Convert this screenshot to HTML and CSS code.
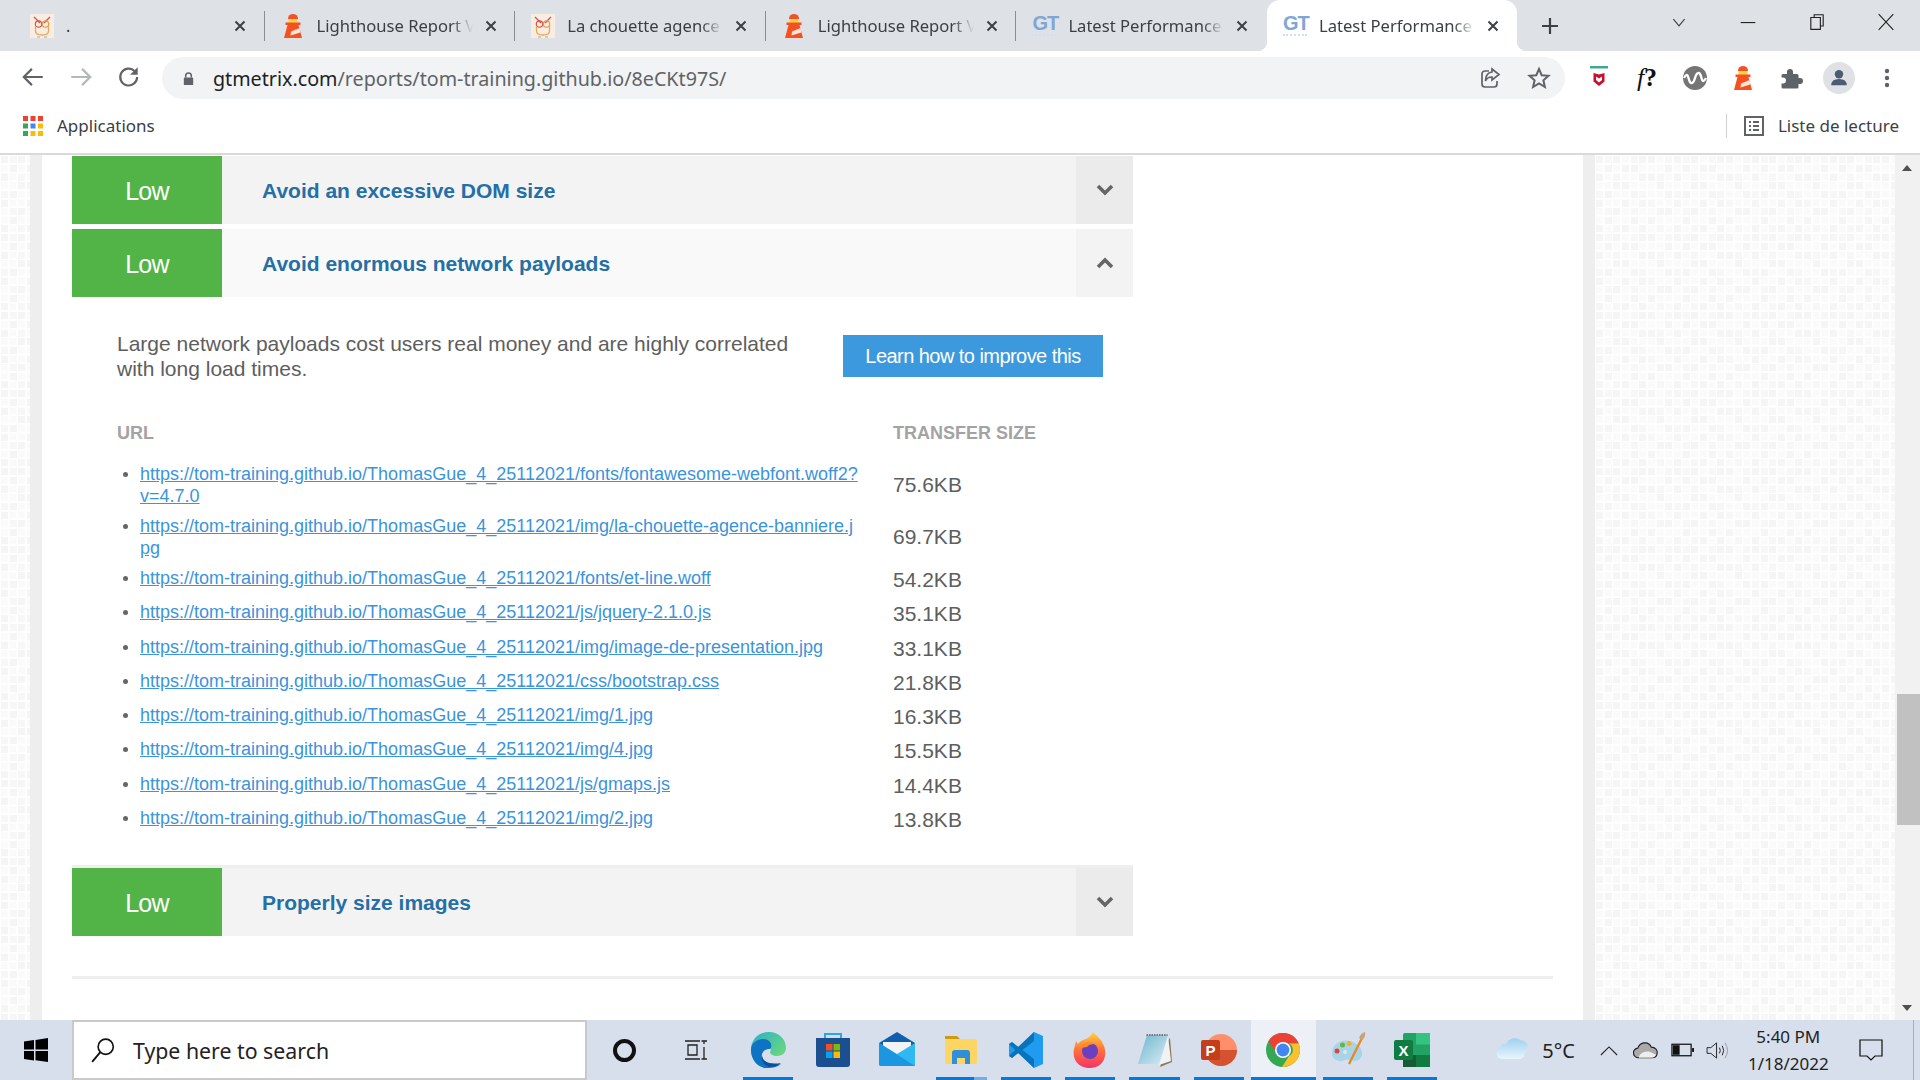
FILE: index.html
```html
<!DOCTYPE html>
<html lang="en">
<head>
    <meta charset="UTF-8">
    <meta name="viewport" content="width=device-width, initial-scale=1.0">
    <title>Latest Performance Report</title>
    <link rel="stylesheet" href="styles.css">
</head>
<body>
    <svg class="defs" aria-hidden="true">
        <defs>
            <pattern id="grid" width="8.67" height="8.67" patternUnits="userSpaceOnUse">
                <rect x="1" y="1" width="7" height="7" fill="#fafafa"/>
            </pattern>
            <pattern id="noise" width="78" height="78" patternUnits="userSpaceOnUse">
                <g fill="#f5f5f5">
                    <rect x="1" y="1" width="7" height="7"/><rect x="18" y="1" width="7" height="7"/><rect x="44" y="1" width="7" height="7"/><rect x="53" y="1" width="7" height="7"/>
                    <rect x="10" y="10" width="7" height="7"/><rect x="27" y="10" width="7" height="7"/><rect x="36" y="10" width="7" height="7"/><rect x="70" y="10" width="7" height="7"/>
                    <rect x="1" y="19" width="7" height="7"/><rect x="44" y="19" width="7" height="7"/><rect x="53" y="19" width="7" height="7"/>
                    <rect x="18" y="27" width="7" height="7"/><rect x="27" y="27" width="7" height="7"/><rect x="62" y="27" width="7" height="7"/>
                    <rect x="10" y="36" width="7" height="7"/><rect x="36" y="36" width="7" height="7"/><rect x="70" y="36" width="7" height="7"/>
                    <rect x="1" y="45" width="7" height="7"/><rect x="27" y="45" width="7" height="7"/><rect x="44" y="45" width="7" height="7"/>
                    <rect x="18" y="53" width="7" height="7"/><rect x="62" y="53" width="7" height="7"/><rect x="70" y="53" width="7" height="7"/>
                    <rect x="10" y="62" width="7" height="7"/><rect x="36" y="62" width="7" height="7"/><rect x="53" y="62" width="7" height="7"/>
                    <rect x="1" y="70" width="7" height="7"/><rect x="27" y="70" width="7" height="7"/><rect x="44" y="70" width="7" height="7"/>
                </g>
                <g fill="#f7f7f7">
                    <rect x="10" y="1" width="7" height="7"/><rect x="36" y="1" width="7" height="7"/><rect x="70" y="1" width="7" height="7"/>
                    <rect x="18" y="19" width="7" height="7"/><rect x="62" y="19" width="7" height="7"/><rect x="1" y="36" width="7" height="7"/>
                    <rect x="44" y="36" width="7" height="7"/><rect x="10" y="53" width="7" height="7"/><rect x="36" y="53" width="7" height="7"/>
                    <rect x="18" y="70" width="7" height="7"/><rect x="62" y="70" width="7" height="7"/><rect x="53" y="45" width="7" height="7"/>
                </g>
            </pattern>
            <symbol id="owl" viewBox="0 0 24 24">
                <rect width="24" height="24" fill="#f8ede3"/>
                <path d="M4 3l6 6M20 3l-6 6" stroke="#d9534a" stroke-width="1.4"/>
                <circle cx="8.5" cy="10" r="3.2" fill="none" stroke="#d9534a" stroke-width="1.2"/>
                <circle cx="15.5" cy="10" r="3.2" fill="none" stroke="#e29a4c" stroke-width="1.2"/>
                <path d="M5.5 12v5q0 4 6.500 4t6.500-4v-5" fill="none" stroke="#e8a85a" stroke-width="1.3"/>
                <path d="M7 23h3M14 23h3" stroke="#c9a080" stroke-width="1"/>
            </symbol>
            <symbol id="lighthouse" viewBox="0 0 24 24">
                <path d="M7 4.500a5 4.500 0 0 1 10 0V5H7z" fill="#f0502a"/>
                <rect x="7.500" y="5" width="9" height="4" fill="#fdd835"/>
                <rect x="4.500" y="8.500" width="15" height="2.500" fill="#f0502a"/>
                <path d="M6.500 11h11L21 24H3z" fill="#f4511e"/>
                <path d="M10 17.500l8.500-3.500 .8 4.500-9.800 3z" fill="#fbe3da"/>
            </symbol>
            <symbol id="x" viewBox="0 0 16 16">
                <path d="M3.500 3.500l9 9M12.500 3.500l-9 9" stroke="#3c4043" stroke-width="2" fill="none"/>
            </symbol>
        </defs>
    </svg>

    <div class="tabstrip">
        <div class="tab">
            <svg class="favicon"><use href="#owl"/></svg>
            <span class="tab-title">.</span>
            <svg class="tab-close"><use href="#x"/></svg>
        </div>
        <i class="tab-sep"></i>
        <div class="tab">
            <svg class="favicon"><use href="#lighthouse"/></svg>
            <span class="tab-title">Lighthouse Report Viewer</span>
            <svg class="tab-close"><use href="#x"/></svg>
        </div>
        <i class="tab-sep"></i>
        <div class="tab">
            <svg class="favicon"><use href="#owl"/></svg>
            <span class="tab-title">La chouette agence</span>
            <svg class="tab-close"><use href="#x"/></svg>
        </div>
        <i class="tab-sep"></i>
        <div class="tab">
            <svg class="favicon"><use href="#lighthouse"/></svg>
            <span class="tab-title">Lighthouse Report Viewer</span>
            <svg class="tab-close"><use href="#x"/></svg>
        </div>
        <i class="tab-sep"></i>
        <div class="tab">
            <span class="favicon gt">GT</span>
            <span class="tab-title">Latest Performance Report</span>
            <svg class="tab-close"><use href="#x"/></svg>
        </div>
        <i class="tab-sep tab-sep-off"></i>
        <div class="tab tab-active">
            <span class="favicon gt">GT</span>
            <span class="tab-title">Latest Performance Report</span>
            <svg class="tab-close"><use href="#x"/></svg>
        </div>
        <svg class="new-tab" viewBox="0 0 20 20"><path d="M10 2v16M2 10h16" stroke="#3c4043" stroke-width="2.200"/></svg>
        <div class="window-controls">
            <svg viewBox="0 0 16 16"><path d="M3 5.500l5 6 5-6" fill="none" stroke="#3c4043"/></svg>
            <svg viewBox="0 0 16 16"><path d="M1.500 8.500h13" stroke="#222" stroke-width="1"/></svg>
            <svg viewBox="0 0 16 16"><path d="M5.500 3.500V1.500h8v10h-2M2.500 4h8.500v10.500H2.500z" fill="none" stroke="#222"/></svg>
            <svg viewBox="0 0 16 16"><path d="M1.500 1l13 14M14.500 1l-13 14" stroke="#222"/></svg>
        </div>
    </div>

    <div class="toolbar">
        <svg class="nav-icon" viewBox="0 0 24 24"><path d="M21 12H4M11 4.500L3.500 12l7.500 7.500" fill="none" stroke="#5f6368" stroke-width="2"/></svg>
        <svg class="nav-icon" viewBox="0 0 24 24"><path d="M3 12h17M13 4.500l7.500 7.500-7.500 7.500" fill="none" stroke="#b4b7bb" stroke-width="2"/></svg>
        <svg class="nav-icon" viewBox="0 0 24 24"><path d="M19.500 12a7.800 7.800 0 1 1-2.300-5.500" fill="none" stroke="#5f6368" stroke-width="2"/><path d="M20 3v7h-7z" fill="#5f6368"/></svg>
        <div class="omnibox">
            <svg class="lock" viewBox="0 0 16 16"><path d="M5 7V5a3 3 0 0 1 6 0v2" fill="none" stroke="#5f6368" stroke-width="1.600"/><rect x="3" y="7" width="10" height="8" rx="1" fill="#5f6368"/></svg>
            <span class="url"><b>gtmetrix.com</b>/reports/tom-training.github.io/8eCKt97S/</span>
            <svg class="omni-icon" viewBox="0 0 24 24"><path d="M11 5H7a3 3 0 0 0-3 3v10a3 3 0 0 0 3 3h9a3 3 0 0 0 3-3v-3" fill="none" stroke="#5f6368" stroke-width="1.700"/><path d="M14 3l7 5.500-7 5.500v-3q-5 0-6.500 4 0-8 6.500-9z" fill="none" stroke="#5f6368" stroke-width="1.700"/></svg>
            <svg class="omni-icon" viewBox="0 0 24 24"><path d="M12 3l2.700 6.200 6.800.6-5.100 4.500 1.500 6.700L12 17.500 6.100 21l1.500-6.700L2.500 9.800l6.800-.6z" fill="none" stroke="#5f6368" stroke-width="2"/></svg>
        </div>
        <div class="extensions">
            <span class="ext">
                <svg viewBox="0 0 24 24"><path d="M3 1h18" stroke="#3fa98c" stroke-width="3"/><path d="M6.500 7l5.500 1.500L17.500 7v8.500L12 20l-5.500-4.500z" fill="#c8102e"/><path d="M9 10.500l3 2 3-2v3.500l-3 2.500-3-2.500z" fill="#fff"/></svg>
            </span>
            <span class="ext ext-f"><i>f</i><b>?</b></span>
            <span class="ext">
                <svg viewBox="0 0 24 24"><circle cx="12" cy="12" r="12" fill="#757575"/><path d="M1 12q3-6 4.500 0t3.500 5 3-5 3-5 3.500 5 4.500 0" fill="none" stroke="#fff" stroke-width="2.300"/></svg>
            </span>
            <span class="ext"><svg viewBox="0 0 24 24"><use href="#lighthouse"/></svg></span>
            <span class="ext">
                <svg viewBox="0 0 24 24"><path d="M4 8h4V6a3 3 0 0 1 6 0v2h4a1.500 1.500 0 0 1 1.500 1.500V12h1.500a3 3 0 0 1 0 6h-1.500v3A1.500 1.500 0 0 1 18 22.500H4A1.500 1.500 0 0 1 2.500 21v-3.500H4a3 3 0 0 0 0-6H2.500v-2A1.500 1.500 0 0 1 4 8z" fill="#5f6368"/></svg>
            </span>
            <span class="ext ext-avatar">
                <svg viewBox="0 0 24 24"><circle cx="12" cy="8" r="4.600" fill="#4d5b75"/><path d="M3.500 20q0-7 8.500-7t8.500 7z" fill="#4d5b75"/></svg>
            </span>
            <span class="ext">
                <svg viewBox="0 0 24 24"><circle cx="12" cy="5" r="2.200" fill="#5f6368"/><circle cx="12" cy="12" r="2.200" fill="#5f6368"/><circle cx="12" cy="19" r="2.200" fill="#5f6368"/></svg>
            </span>
        </div>
    </div>

    <div class="bookmarks">
        <svg class="apps" viewBox="0 0 20 20">
            <rect x="0" y="0" width="5" height="5" fill="#ea4335"/><rect x="7.500" y="0" width="5" height="5" fill="#ea4335"/><rect x="15" y="0" width="5" height="5" fill="#ea4335"/>
            <rect x="0" y="7.500" width="5" height="5" fill="#34a853"/><rect x="7.500" y="7.500" width="5" height="5" fill="#4285f4"/><rect x="15" y="7.500" width="5" height="5" fill="#fbbc04"/>
            <rect x="0" y="15" width="5" height="5" fill="#34a853"/><rect x="7.500" y="15" width="5" height="5" fill="#fbbc04"/><rect x="15" y="15" width="5" height="5" fill="#fbbc04"/>
        </svg>
        <span class="bookmark-label">Applications</span>
        <div class="reading-list">
            <svg viewBox="0 0 20 20"><rect x="1" y="1" width="18" height="18" fill="none" stroke="#5f6368" stroke-width="2"/><path d="M5 6h2M9 6h6M5 10h2M9 10h6M5 14h2M9 14h6" stroke="#5f6368" stroke-width="1.800"/></svg>
            <span class="bookmark-label">Liste de lecture</span>
        </div>
    </div>

    <div class="page">
        <svg class="side side-left"><rect width="100%" height="100%" fill="url(#grid)"/><rect width="100%" height="100%" fill="url(#noise)"/></svg>
        <main class="report">
            <div class="row">
                <div class="badge">Low</div>
                <div class="row-title">Avoid an excessive DOM size</div>
                <div class="row-toggle"><svg viewBox="0 0 20 14"><path d="M3 3l7 7 7-7" fill="none" stroke="#666" stroke-width="3.600"/></svg></div>
            </div>
            <div class="row row-open">
                <div class="badge">Low</div>
                <div class="row-title">Avoid enormous network payloads</div>
                <div class="row-toggle"><svg viewBox="0 0 20 14"><path d="M3 11l7-7 7 7" fill="none" stroke="#666" stroke-width="3.600"/></svg></div>
            </div>
            <div class="detail">
                <div class="intro">
                    <p>Large network payloads cost users real money and are highly correlated with long load times.</p>
                    <a class="learn-btn" href="#">Learn how to improve this</a>
                </div>
                <table class="sizes">
                    <thead>
                        <tr><th>URL</th><th>TRANSFER SIZE</th></tr>
                    </thead>
                    <tbody>
                        <tr><td><a href="#">https://tom-training.github.io/ThomasGue_4_25112021/fonts/fontawesome-webfont.woff2?v=4.7.0</a></td><td>75.6KB</td></tr>
                        <tr><td><a href="#">https://tom-training.github.io/ThomasGue_4_25112021/img/la-chouette-agence-banniere.jpg</a></td><td>69.7KB</td></tr>
                        <tr><td><a href="#">https://tom-training.github.io/ThomasGue_4_25112021/fonts/et-line.woff</a></td><td>54.2KB</td></tr>
                        <tr><td><a href="#">https://tom-training.github.io/ThomasGue_4_25112021/js/jquery-2.1.0.js</a></td><td>35.1KB</td></tr>
                        <tr><td><a href="#">https://tom-training.github.io/ThomasGue_4_25112021/img/image-de-presentation.jpg</a></td><td>33.1KB</td></tr>
                        <tr><td><a href="#">https://tom-training.github.io/ThomasGue_4_25112021/css/bootstrap.css</a></td><td>21.8KB</td></tr>
                        <tr><td><a href="#">https://tom-training.github.io/ThomasGue_4_25112021/img/1.jpg</a></td><td>16.3KB</td></tr>
                        <tr><td><a href="#">https://tom-training.github.io/ThomasGue_4_25112021/img/4.jpg</a></td><td>15.5KB</td></tr>
                        <tr><td><a href="#">https://tom-training.github.io/ThomasGue_4_25112021/js/gmaps.js</a></td><td>14.4KB</td></tr>
                        <tr><td><a href="#">https://tom-training.github.io/ThomasGue_4_25112021/img/2.jpg</a></td><td>13.8KB</td></tr>
                    </tbody>
                </table>
            </div>
            <div class="row row-last">
                <div class="badge">Low</div>
                <div class="row-title">Properly size images</div>
                <div class="row-toggle"><svg viewBox="0 0 20 14"><path d="M3 3l7 7 7-7" fill="none" stroke="#666" stroke-width="3.600"/></svg></div>
            </div>
            <hr class="divider">
        </main>
        <svg class="side side-right"><rect width="100%" height="100%" fill="url(#grid)"/><rect width="100%" height="100%" fill="url(#noise)"/></svg>
        <div class="scrollbar">
            <span class="arrow-up"></span>
            <div class="thumb"></div>
            <span class="arrow-down"></span>
        </div>
    </div>

    <div class="taskbar">
        <div class="start">
            <svg viewBox="0 0 24 24"><path d="M0 3.500l10-1.400V11.500H0zM11.500 1.900L24 0v11.500H11.500zM0 13h10v9.400L0 21zM11.500 13H24v11l-12.500-1.800z" fill="#000"/></svg>
        </div>
        <div class="search">
            <svg viewBox="0 0 24 24"><circle cx="14.500" cy="9" r="7" fill="none" stroke="#111" stroke-width="1.500"/><path d="M9.500 14L2 23" stroke="#111" stroke-width="1.700"/></svg>
            <span>Type here to search</span>
        </div>
        <div class="cortana"><span class="cortana-ring"></span></div>
        <div class="taskview">
            <svg viewBox="0 0 24 24"><path d="M1 3h15M1 21h15M4 7h9v10H4zM20 3v3M20 9v12M17.500 3H23M17.500 21H23" fill="none" stroke="#222" stroke-width="1.300"/></svg>
        </div>

        <div class="app app-open">
            <svg viewBox="0 0 36 36">
                <defs><linearGradient id="edge-a" x1="0" y1="0" x2="1" y2="1"><stop offset="0" stop-color="#2bb0c9"/><stop offset="1" stop-color="#7de36a"/></linearGradient></defs>
                <path d="M1 18C1 7 9 0 19 0c10 0 17 7 17 16 0 5-4 8-9 8-4 0-7-2-7-4 2-2 0-7-5-7S6 18 6 22c0 8 8 14 19 12-3 1.500-5 2-8 2C8 36 1 28 1 18z" fill="url(#edge-a)"/>
                <path d="M1 18c0-7 6-11 12-11 8 0 10 7 7 10-5 0-9 3-8 8 1 5 6 9 19 7-4 3-8 4-14 4C8 36 1 28 1 18z" fill="#0f73c4"/>
                <path d="M12 24c1 5 6 9 19 7-4 3-8 4-12 4C14 33 11 29 12 24z" fill="#0b4f9e"/>
            </svg>
        </div>
        <div class="app">
            <svg viewBox="0 0 36 36">
                <path d="M10 6V2h16v4" fill="none" stroke="#29a8e8" stroke-width="2"/>
                <path d="M1 6h34v26a3 3 0 0 1-3 3H4a3 3 0 0 1-3-3z" fill="#1b4f8f"/>
                <rect x="11" y="12" width="6.500" height="6.500" fill="#f25022"/><rect x="18.500" y="12" width="6.500" height="6.500" fill="#7fba00"/>
                <rect x="11" y="19.500" width="6.500" height="6.500" fill="#00a4ef"/><rect x="18.500" y="19.500" width="6.500" height="6.500" fill="#ffb900"/>
            </svg>
        </div>
        <div class="app">
            <svg viewBox="0 0 36 36">
                <path d="M18 0l18 11v4H0v-4z" fill="#0f5fae"/>
                <path d="M4 10h28v8L18 24 4 18z" fill="#f3f3f3"/>
                <path d="M0 11l18 11 18-11v23H2a2 2 0 0 1-2-2z" fill="#30b8f0"/>
                <path d="M0 11l36 23H2a2 2 0 0 1-2-2z" fill="#1c96e0"/>
            </svg>
        </div>
        <div class="app app-open app-split">
            <svg viewBox="0 0 36 36">
                <path d="M2 4h12l3 3h-15z" fill="#d09a10"/>
                <rect x="2" y="7" width="32" height="25" rx="2" fill="#fcd562"/>
                <path d="M9 32V21q0-3 3-3h12q3 0 3 3v11h-5v-6h-8v6z" fill="#2f8fd8"/>
            </svg>
        </div>
        <div class="app app-open">
            <svg viewBox="0 0 36 36">
                <path d="M26 0l9 4v28l-9 4L10 21l-6 5-3-2v-12l3-2 6 5z" fill="#1f9cf0"/>
                <path d="M26 0v36L1 12l3-2 22 17V9L4 26l-3-2z" fill="#0065a9" opacity=".75"/>
            </svg>
        </div>
        <div class="app app-open">
            <svg viewBox="0 0 36 36">
                <defs><linearGradient id="fox" x1="0" y1="0" x2="0" y2="1"><stop offset="0" stop-color="#ffd53d"/><stop offset=".5" stop-color="#ff7139"/><stop offset="1" stop-color="#f5326a"/></linearGradient></defs>
                <path d="M21 0c4 4 8 7 10 12 5 9 2 24-13 24C6 36 0 27 2 17l2-8 2 3c1-2 3-3 5-4 4-1 8-4 10-8z" fill="url(#fox)"/>
                <circle cx="18" cy="19" r="8" fill="#6a3fc0"/>
                <path d="M8 14c4-4 10-5 15-2-4 0-7 1-8 3l-7 1z" fill="#ff8a2a"/>
            </svg>
        </div>
        <div class="app app-open">
            <svg viewBox="0 0 36 36">
                <defs><linearGradient id="pad" x1="0" y1="0" x2="1" y2="1"><stop offset="0" stop-color="#6fb4cc"/><stop offset="1" stop-color="#d8eef5"/></linearGradient></defs>
                <path d="M33 6l2 24-12 5 9-28z" fill="#8a7a55"/>
                <path d="M31 4l3 25-12 4 9-29z" fill="#f0f3f4"/>
                <path d="M10 3h21l-9 29H1z" fill="url(#pad)"/>
                <path d="M9.500 3h21" stroke="#777" stroke-width="2" stroke-dasharray="1.500 1"/>
            </svg>
        </div>
        <div class="app app-open">
            <svg viewBox="0 0 36 36">
                <circle cx="20" cy="18" r="16" fill="#ff8f6b"/>
                <path d="M20 18h16a16 16 0 0 1-32 0z" fill="#d35230"/>
                <rect x="0" y="8" width="19" height="20" rx="2" fill="#c43e1c"/>
                <text x="9.500" y="23.500" class="app-letter">P</text>
            </svg>
        </div>
        <div class="app app-open app-active">
            <svg viewBox="0 0 36 36">
                <circle cx="18" cy="18" r="17" fill="#34a853"/>
                <path d="M3.300 9.500A17 17 0 0 1 33.700 11.500H18a7 7 0 0 0-6.500 9z" fill="#ea4335"/>
                <path d="M33.700 11.500A17 17 0 0 1 17 35l7-11a7 7 0 0 0 0-12.500z" fill="#fbc02d"/>
                <circle cx="18" cy="18" r="8" fill="#fff"/>
                <circle cx="18" cy="18" r="6.400" fill="#4285f4"/>
            </svg>
        </div>
        <div class="app app-open">
            <svg viewBox="0 0 36 36">
                <path d="M2 20C3 11 12 7 20 9c8 2 13 8 12 14-1 6-8 7-12 5-4-2-7 2-11 1-4-1-8-4-7-9z" fill="#a9d4e8"/>
                <circle cx="7" cy="19" r="2.500" fill="#d9453d"/>
                <circle cx="12.500" cy="13" r="2.500" fill="#66b543"/>
                <circle cx="19" cy="11.500" r="2.500" fill="#f0b429"/>
                <circle cx="15" cy="20" r="2" fill="#dde6ea"/>
                <path d="M33 4L19 32" stroke="#e88a1e" stroke-width="2.200"/>
                <path d="M29 6q2-5 6-6 1 5-3 8z" fill="#c9a27a"/>
            </svg>
        </div>
        <div class="app app-open">
            <svg viewBox="0 0 36 36">
                <rect x="9" y="1" width="27" height="34" rx="2" fill="#21a366"/>
                <rect x="22" y="1" width="14" height="11.500" fill="#33c481"/>
                <rect x="22" y="23" width="14" height="12" fill="#107c41"/>
                <rect x="9" y="23" width="13" height="12" fill="#185c37"/>
                <rect x="0" y="8" width="19" height="20" rx="2" fill="#107c41"/>
                <text x="9.500" y="23.500" class="app-letter">X</text>
            </svg>
        </div>

        <div class="tray">
            <svg class="tray-weather" viewBox="0 0 34 24">
                <defs><linearGradient id="cloud" x1="0" y1="0" x2="0" y2="1"><stop offset="0" stop-color="#9fd0f0"/><stop offset="1" stop-color="#e8f5fd"/></linearGradient></defs>
                <path d="M7 23a6 6 0 0 1-2-11.500C6 8 9 7 11 8c2-5 9-8 14-4 3 .5 7 2 8 6-1 2-2 2-2 3 0 4-2 10-7 10z" fill="url(#cloud)"/>
            </svg>
            <span class="tray-temp">5°C</span>
            <svg class="tray-up" viewBox="0 0 20 12"><path d="M1 11l9-9 9 9" fill="none" stroke="#222" stroke-width="1.200"/></svg>
            <svg class="tray-cloud" viewBox="0 0 26 18"><path d="M6 17a5 5 0 0 1-1-10c2-6 11-8 14-1 4 0 7 3 6 7-.500 3-3 4-5 4z" fill="#aaa" stroke="#222" stroke-width="1.200"/><path d="M6 17c0-4 6-8 12-6l6 3c-1 2-3 3-4 3z" fill="#eee"/></svg>
            <svg class="tray-battery" viewBox="0 0 24 14"><rect x="1" y="1" width="20" height="12" fill="none" stroke="#111" stroke-width="1.300"/><rect x="2" y="2" width="7" height="10" fill="#111"/><rect x="22" y="5" width="2" height="4" fill="#111"/></svg>
            <svg class="tray-sound" viewBox="0 0 24 20"><path d="M1 7h4l6-5v16l-6-5H1z" fill="none" stroke="#222"/><path d="M14 7q2 3 0 6M17 5q3 5 0 10" fill="none" stroke="#222"/><path d="M20 2q5 8 0 16" fill="none" stroke="#999"/></svg>
            <div class="clock"><span>5:40 PM</span><span>1/18/2022</span></div>
            <svg class="tray-notify" viewBox="0 0 24 24"><path d="M1 2h22v16h-7l-4 4-4-4H1z" fill="none" stroke="#111" stroke-width="1.200"/></svg>
            <i class="show-desktop"></i>
        </div>
    </div>
</body>
</html>
```

FILE: styles.css
```css
* {
    box-sizing: border-box;
}
html, body {
    margin: 0;
    height: 100%;
}
body {
    width: 1920px;
    height: 1080px;
    display: flex;
    flex-direction: column;
    overflow: hidden;
    font-family: "Liberation Sans", Arial, sans-serif;
    background: #fff;
}
.defs {
    position: absolute;
    width: 0;
    height: 0;
}

/* browser chrome */
.tabstrip {
    height: 51px;
    flex: none;
    display: flex;
    align-items: center;
    padding-left: 14px;
    background: #dee1e6;
}
.tab {
    position: relative;
    width: 249.6px;
    height: 51px;
    flex: none;
    display: flex;
    align-items: center;
    padding-left: 16px;
    font-family: "Noto Sans", sans-serif;
    font-size: 16.6px;
    color: #3c4043;
}
.tab-active {
    background: #fff;
    border-radius: 13px 13px 0 0;
}
.tab-active::before, .tab-active::after {
    content: "";
    position: absolute;
    bottom: 0;
    width: 10px;
    height: 10px;
}
.tab-active::before {
    left: -10px;
    background: radial-gradient(circle at 0 0, #dee1e6 10px, #fff 10.5px);
}
.tab-active::after {
    right: -10px;
    background: radial-gradient(circle at 100% 0, #dee1e6 10px, #fff 10.5px);
}
.favicon {
    width: 24px;
    height: 24px;
    flex: none;
    margin-right: 12px;
}
.gt {
    font-family: "Liberation Sans", sans-serif;
    font-size: 20px;
    font-weight: bold;
    line-height: 22px;
    letter-spacing: -1px;
    color: #7fa6d6;
    border-bottom: 2px dotted #cfe0f0;
    margin-top: -4px;
}
.tab-title {
    width: 156px;
    flex: none;
    overflow: hidden;
    white-space: nowrap;
    margin-top: -1px;
    -webkit-mask-image: linear-gradient(to right, #000 86%, transparent 100%);
    mask-image: linear-gradient(to right, #000 86%, transparent 100%);
}
.tab-close {
    width: 16px;
    height: 16px;
    flex: none;
    margin-left: 10px;
}
.tab-sep {
    width: 1px;
    height: 30px;
    flex: none;
    background: #8a8d91;
}
.tab-sep-off {
    background: transparent;
}
.new-tab {
    width: 20px;
    height: 20px;
    flex: none;
    margin-left: 23px;
}
.window-controls {
    margin-left: auto;
    width: 276px;
    height: 51px;
    display: flex;
    align-items: flex-start;
}
.window-controls svg {
    width: 18px;
    height: 18px;
    margin: 13px 25px 0 26px;
    flex: none;
}
.toolbar {
    height: 51px;
    flex: none;
    display: flex;
    align-items: center;
    padding-left: 20px;
}
.nav-icon {
    width: 26px;
    height: 26px;
    flex: none;
    margin-right: 22px;
}
.omnibox {
    width: 1403px;
    height: 42px;
    margin-top: 3px;
    margin-left: -2px;
    flex: none;
    display: flex;
    align-items: center;
    padding-left: 19px;
    background: #f1f3f4;
    border-radius: 21px;
}
.lock {
    width: 15px;
    height: 15px;
    flex: none;
    margin-right: 17px;
}
.url {
    flex: 1;
    font-family: "Noto Sans", sans-serif;
    font-size: 19.7px;
    color: #5f6368;
    white-space: nowrap;
}
.url b {
    font-weight: normal;
    color: #202124;
}
.omni-icon {
    width: 24px;
    height: 24px;
    flex: none;
    margin-right: 25px;
}
.omni-icon:last-child {
    margin-right: 14px;
}
.extensions {
    display: flex;
    align-items: center;
    margin-left: 10px;
    margin-top: 2px;
}
.ext {
    width: 48px;
    height: 40px;
    display: flex;
    align-items: center;
    justify-content: center;
    flex: none;
}
.ext svg {
    width: 24px;
    height: 24px;
}
.ext-f {
    font-family: "Liberation Serif", serif;
    font-size: 26px;
    color: #111;
}
.ext-avatar svg {
    width: 32px;
    height: 32px;
    padding: 5px;
    background: #dfe1e5;
    border-radius: 50%;
}
.bookmarks {
    height: 53px;
    flex: none;
    display: flex;
    align-items: center;
    padding: 0 21px 4px 23px;
    border-bottom: 2px solid #dadada;
}
.apps {
    width: 20px;
    height: 20px;
    flex: none;
    margin-right: 14px;
}
.bookmark-label {
    font-family: "Noto Sans", sans-serif;
    font-size: 17px;
    color: #3c4043;
}
.reading-list {
    margin-left: auto;
    height: 24px;
    display: flex;
    align-items: center;
    padding-left: 17px;
    border-left: 1px solid #d0d0d0;
}
.reading-list svg {
    width: 20px;
    height: 20px;
    margin-right: 14px;
}

/* page behind the report */
.page {
    height: 865px;
    flex: none;
    display: flex;
}
.side {
    width: 30px;
    height: 100%;
    flex: none;
    background: #fff;
}
.side-right {
    width: 300px;
}
.report {
    width: 1565px;
    flex: none;
    padding: 1px 30px 0;
    background: #fff;
    border-left: 12px solid #eee;
    border-right: 12px solid #eee;
}
.scrollbar {
    position: relative;
    width: 25px;
    flex: none;
    background: #f1f1f1;
}
.thumb {
    position: absolute;
    top: 539px;
    left: 2px;
    right: 0;
    height: 131px;
    background: #c1c1c1;
}
.arrow-up, .arrow-down {
    position: absolute;
    left: 7px;
    width: 0;
    height: 0;
    border-left: 5.5px solid transparent;
    border-right: 5.5px solid transparent;
}
.arrow-up {
    top: 10px;
    border-bottom: 6px solid #505050;
}
.arrow-down {
    bottom: 9px;
    border-top: 6px solid #505050;
}

/* audit rows */
.row {
    width: 1061px;
    height: 68px;
    display: flex;
    align-items: stretch;
    background: #f3f3f3;
}
.row + .row {
    margin-top: 5px;
}
.row-open {
    background: #f9f9f9;
}
.row-last {
    height: 71px;
    border-top: 3px solid #eee;
}
.badge {
    width: 150px;
    flex: none;
    display: flex;
    align-items: center;
    justify-content: center;
    padding-top: 2px;
    font-size: 25px;
    letter-spacing: -.8px;
    color: #fff;
    background: #52b447;
}
.row-title {
    flex: 1;
    display: flex;
    align-items: center;
    padding-left: 40px;
    padding-top: 1px;
    font-size: 21px;
    font-weight: bold;
    color: #246fa5;
}
.row-toggle {
    width: 57px;
    flex: none;
    display: flex;
    align-items: center;
    justify-content: center;
    background: #ebebeb;
}
.row-open .row-toggle {
    background: #f3f3f3;
}
.row-toggle svg {
    width: 20px;
    height: 14px;
}
.detail {
    width: 1061px;
    height: 568px;
    padding: 38px 30px 0 45px;
}
.intro {
    display: flex;
    align-items: flex-start;
}
.intro p {
    width: 726px;
    margin: -4px 0 0;
    padding-right: 30px;
    font-size: 21px;
    line-height: 25px;
    color: #5e5e5e;
}
.learn-btn {
    width: 260px;
    height: 42px;
    flex: none;
    display: flex;
    align-items: center;
    justify-content: center;
    font-size: 20px;
    letter-spacing: -.55px;
    color: #fff;
    text-decoration: none;
    background: #3d99dd;
}
.sizes {
    width: 910px;
    margin-top: 41px;
    border-collapse: collapse;
    table-layout: fixed;
}
.sizes th {
    padding: 0 0 15px;
    text-align: left;
    white-space: nowrap;
    font-size: 18px;
    line-height: 22px;
    color: #a3a3a3;
}
.sizes th:first-child {
    width: 776px;
}
.sizes td {
    padding: 4px 0;
    vertical-align: middle;
    font-size: 21px;
    line-height: 26.3px;
    color: #5e5e5e;
}
.sizes td:first-child {
    position: relative;
    vertical-align: top;
    padding-left: 23px;
    padding-right: 34px;
    font-size: 18px;
    line-height: 22px;
    word-break: break-all;
}
.sizes td:first-child::before {
    content: "";
    position: absolute;
    left: 6px;
    top: 13px;
    width: 5px;
    height: 5px;
    border-radius: 50%;
    background: #666;
}
.sizes a {
    color: #3b94dc;
}
.divider {
    margin: 40px 0 0;
    height: 3px;
    border: 0;
    background: #eee;
}

/* windows taskbar */
.taskbar {
    height: 60px;
    flex: none;
    display: flex;
    align-items: stretch;
    background: #d7deec;
}
.start {
    width: 72px;
    flex: none;
    display: flex;
    align-items: center;
    justify-content: center;
}
.start svg {
    width: 24px;
    height: 24px;
}
.search {
    width: 515px;
    flex: none;
    display: flex;
    align-items: center;
    padding-left: 16px;
    font-family: "Noto Sans", sans-serif;
    font-size: 21.3px;
    color: #222;
    background: #fff;
    border: 2px solid #c9c9c9;
}
.search svg {
    width: 26px;
    height: 26px;
    margin-right: 17px;
}
.cortana {
    width: 74px;
    flex: none;
    display: flex;
    align-items: center;
    justify-content: center;
}
.cortana-ring {
    width: 23px;
    height: 23px;
    border: 4px solid #111;
    border-radius: 50%;
}
.taskview {
    width: 70px;
    flex: none;
    display: flex;
    align-items: center;
    justify-content: center;
}
.taskview svg {
    width: 24px;
    height: 24px;
}
.app {
    width: 64.4px;
    flex: none;
    position: relative;
    display: flex;
    align-items: center;
    justify-content: center;
    padding-bottom: 1px;
}
.taskview + .app {
    margin-left: 5px;
}
.app svg {
    width: 36px;
    height: 36px;
}
.app-open::after {
    content: "";
    position: absolute;
    left: 7px;
    right: 7px;
    bottom: 0;
    height: 3px;
    background: #0878d4;
}
.app-split::after {
    right: 20px;
}
.app-split::before {
    content: "";
    position: absolute;
    left: 44px;
    right: 7px;
    bottom: 0;
    height: 3px;
    background: #6fb0e6;
}
.app-active {
    background: #eef0f7;
}
.app-active::after {
    left: 0;
    right: 0;
}
.app-letter {
    font-family: "Liberation Sans", sans-serif;
    font-size: 15px;
    font-weight: bold;
    text-anchor: middle;
    fill: #fff;
}
.tray {
    flex: 1;
    display: flex;
    align-items: center;
    padding-left: 51px;
    color: #222;
    font-family: "Noto Sans", sans-serif;
}
.tray-weather {
    width: 34px;
    height: 24px;
    margin-right: 13px;
    margin-top: -5px;
}
.tray-temp {
    width: 58px;
    font-size: 20px;
}
.tray-up {
    width: 18px;
    height: 11px;
}
.tray-cloud {
    width: 25px;
    height: 18px;
    margin-left: 15px;
}
.tray-battery {
    width: 23px;
    height: 14px;
    margin-left: 13px;
}
.tray-sound {
    width: 23px;
    height: 19px;
    margin-left: 12px;
}
.clock {
    width: 110px;
    margin-left: 4px;
    display: flex;
    flex-direction: column;
    align-items: center;
    gap: 6px;
    font-size: 17px;
    line-height: 21px;
}
.tray-notify {
    width: 24px;
    height: 24px;
    margin-left: 16px;
}
.show-desktop {
    width: 1px;
    height: 100%;
    margin-left: auto;
    margin-right: 6px;
    background: #a9aeb8;
}
```
